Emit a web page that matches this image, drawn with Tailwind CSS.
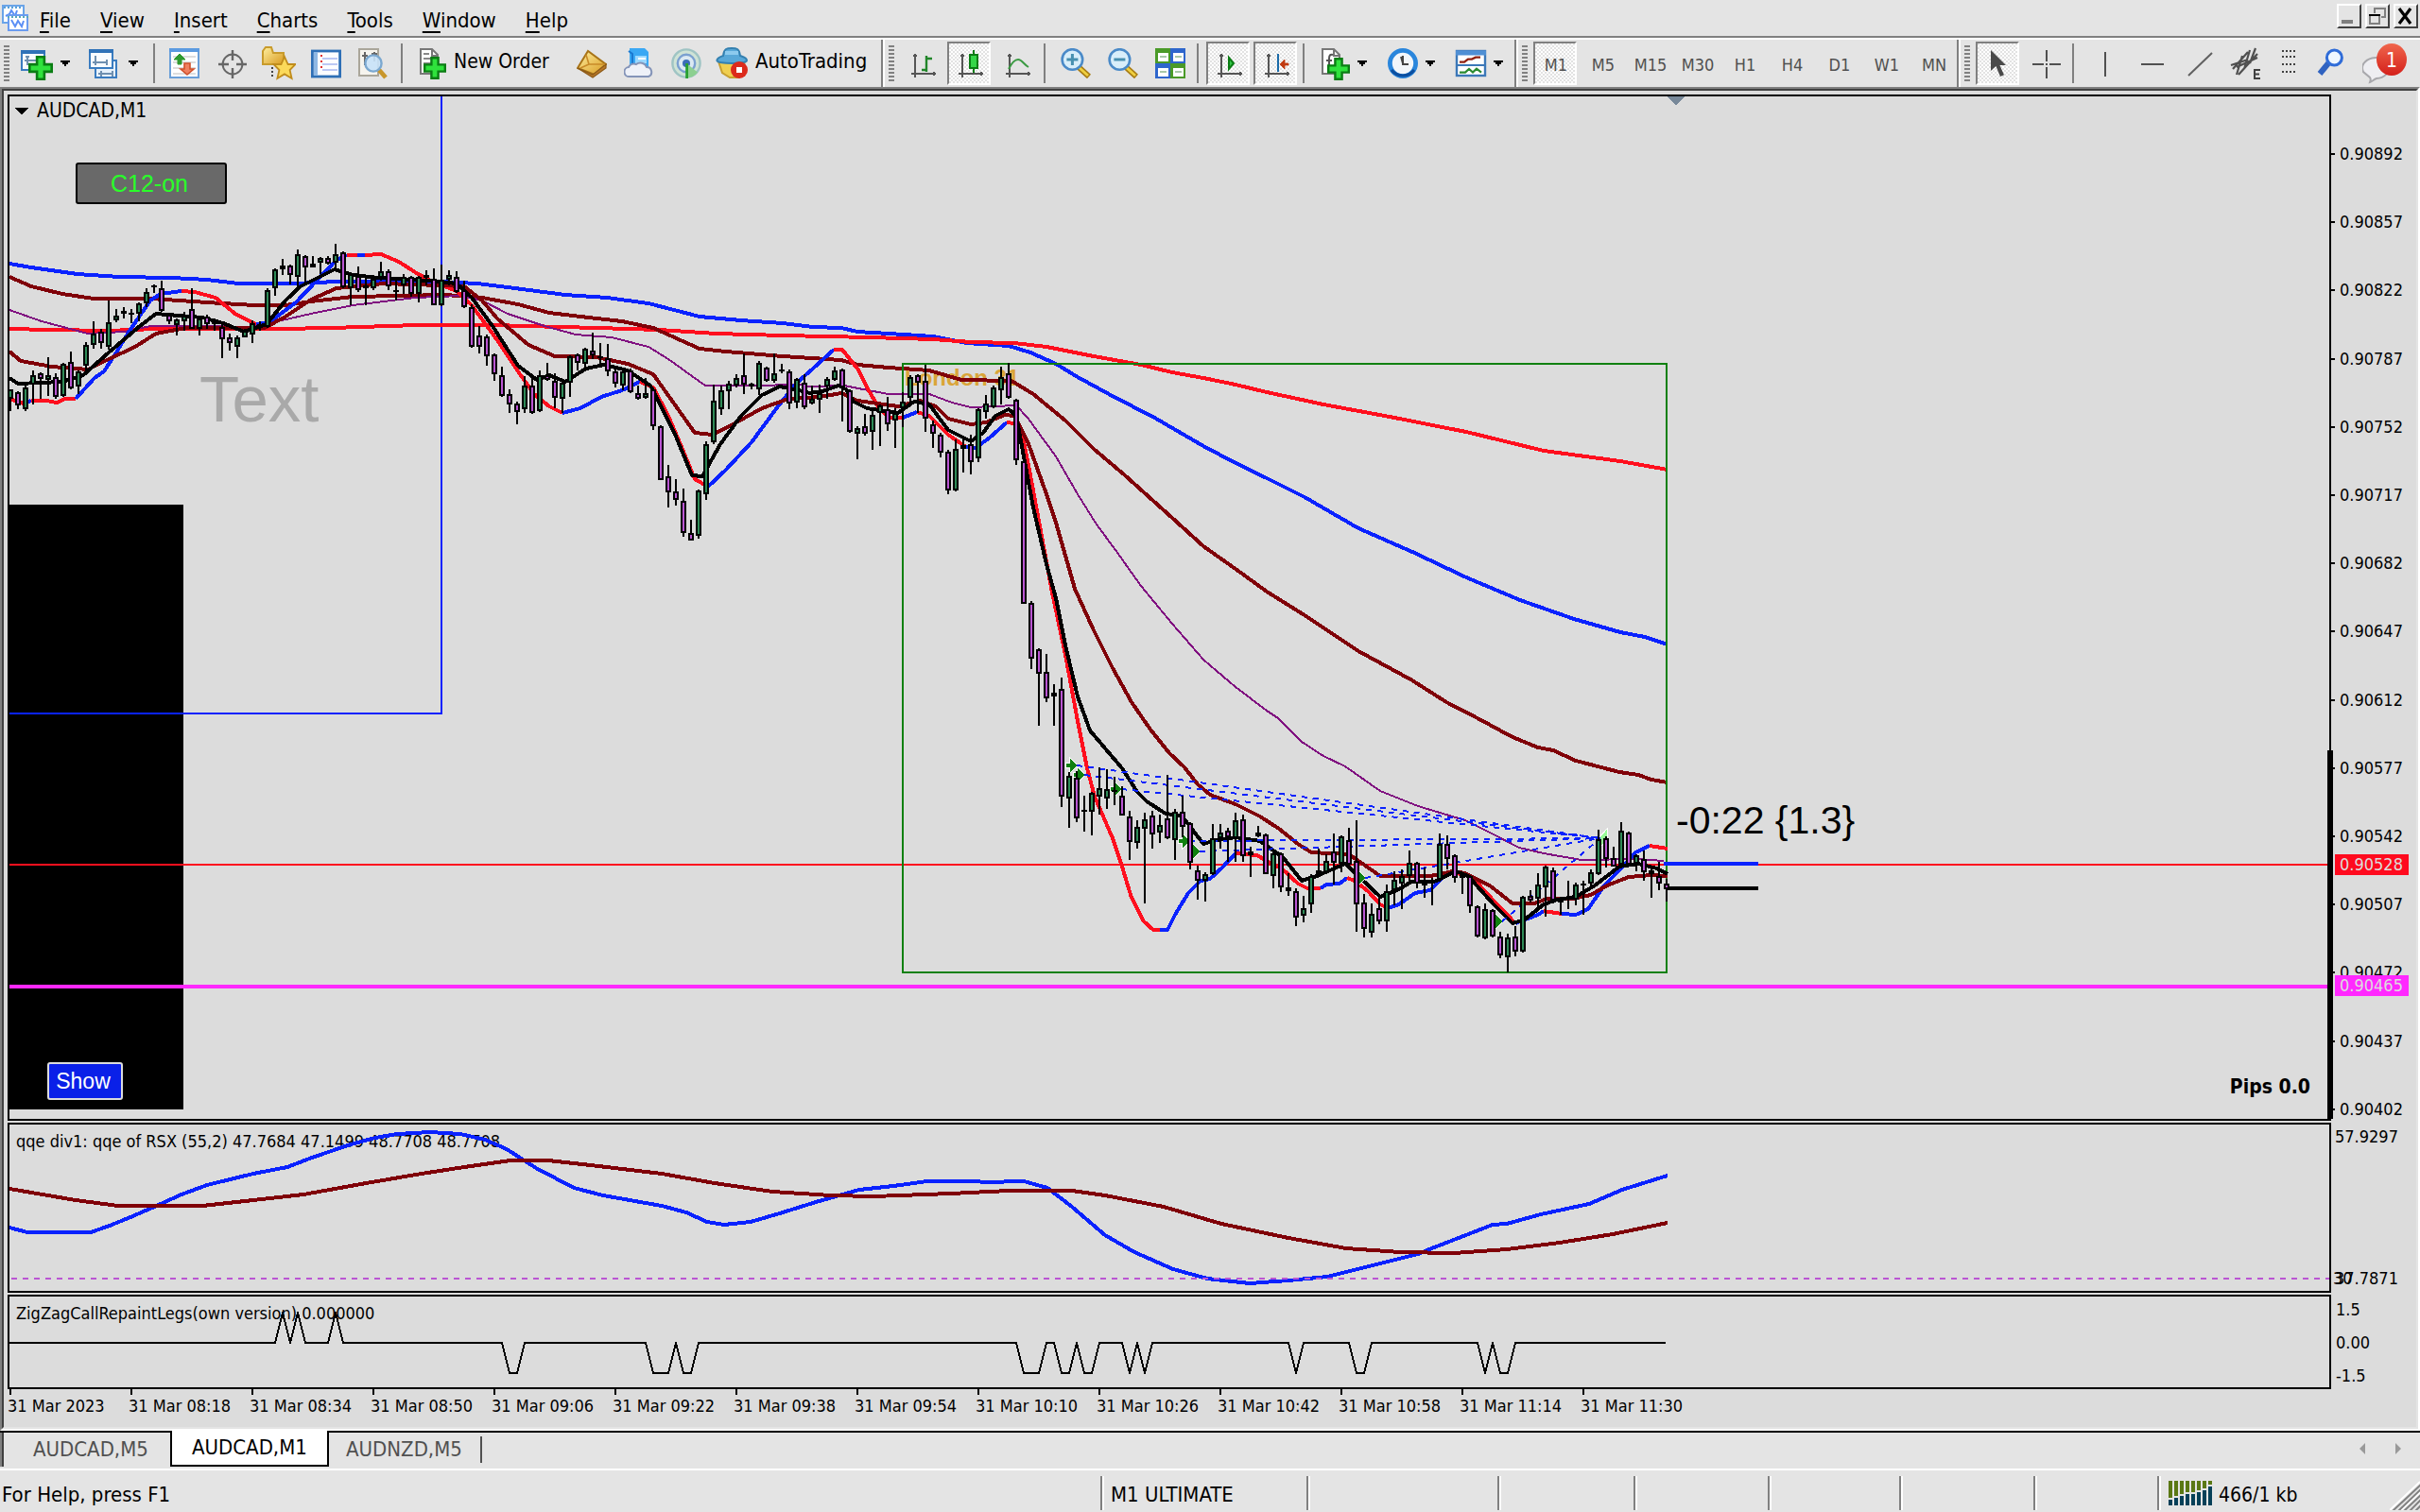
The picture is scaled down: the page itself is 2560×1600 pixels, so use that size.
<!DOCTYPE html>
<html lang="en">
<head>
<meta charset="utf-8">
<title>AUDCAD,M1</title>
<script src="https://cdn.jsdelivr.net/npm/@tailwindcss/browser@4"></script>
</head>
<body class="flex h-screen flex-col overflow-hidden bg-[#e4e4e4] font-['DejaVu_Sans_Condensed','DejaVu_Sans',sans-serif] text-[22px] leading-6 text-black">

<svg class="absolute h-0 w-0" aria-hidden="true">
  <defs>
    <linearGradient id="badge" x2="0" y2="1"><stop stop-color="#f0664c"/><stop offset="1" stop-color="#d4201a"/></linearGradient>
    <linearGradient id="gold" x2="1" y2="1"><stop stop-color="#fff0a0"/><stop offset="1" stop-color="#d89a20"/></linearGradient>
    <symbol id="plus" viewBox="0 0 10 10"><path d="M3.500.5h3v3h3v3h-3v3h-3v-3h-3v-3h3z" fill="#2fe23c" stroke="#0b7d14"/></symbol>
    <symbol id="axes" viewBox="0 0 16 16"><path d="M3.500 3v12.500M1.500 13.500h13M2.500 4h2M13.500 12.500v2" fill="none" stroke="#555"/></symbol>
    <symbol id="drop" viewBox="0 0 10 6"><path d="M0 0h10v2h-2v2h-2v2h-2v-2h-2v-2h-2z"/></symbol>
  </defs>
</svg>

<header class="flex h-[42px] shrink-0 items-center border-b-2 border-white">
  <div class="flex h-10 w-full items-center border-b-2 border-[#808080] pl-[2px]">
    <svg class="h-7 w-7" viewBox="0 0 14 14"><rect x=".5" y=".5" width="11" height="9" fill="#fff" stroke="#6aa4e8"/><path d="M1 1.500h10" stroke="#58a0d8" stroke-dasharray="1 1"/><path d="M2 6l2-1 1-2 2 3 1-3" fill="none" stroke="#5b8ff5"/><rect x="3.500" y="5.500" width="10" height="8" fill="#fff" stroke="#6a9cf0"/><path d="M3 6.500h11" stroke="#58a8b8" stroke-dasharray="1 1"/><path d="M5 8l2 3.500 1.500-3 2 3 1-3" fill="none" stroke="#5b8ff5"/></svg>
    <nav class="ml-[12px] flex flex-1 items-center gap-[31px] pt-[6px]">
      <button><u class="decoration-2 underline-offset-4">F</u>ile</button>
      <button><u class="decoration-2 underline-offset-4">V</u>iew</button>
      <button><u class="decoration-2 underline-offset-4">I</u>nsert</button>
      <button><u class="decoration-2 underline-offset-4">C</u>harts</button>
      <button><u class="decoration-2 underline-offset-4">T</u>ools</button>
      <button><u class="decoration-2 underline-offset-4">W</u>indow</button>
      <button><u class="decoration-2 underline-offset-4">H</u>elp</button>
    </nav>
    <div class="flex gap-1 self-start pt-1 pr-[2px]">
      <button aria-label="Minimize" class="h-[26px] w-[26px] border-2 border-t-white border-r-[#404040] border-b-[#404040] border-l-white"><svg class="h-[22px] w-[22px]" viewBox="0 0 11 11"><path d="M1.500 8.500h6" stroke="#808080" stroke-width="2"/></svg></button>
      <button aria-label="Restore" class="h-[26px] w-[26px] border-2 border-t-white border-r-[#404040] border-b-[#404040] border-l-white"><svg class="h-[22px] w-[22px]" viewBox="0 0 11 11"><path d="M4 4v-2.500h5.500v4.500h-2" fill="none" stroke="#808080"/><path d="M1.500 5.500v4h5v-4" fill="none" stroke="#808080"/><path d="M1 5h6" stroke="#000" stroke-width="1"/></svg></button>
      <button aria-label="Close" class="h-[26px] w-[26px] border-2 border-t-white border-r-[#404040] border-b-[#404040] border-l-white"><svg class="h-[22px] w-[22px]" viewBox="0 0 11 11"><path d="M2 1.500l6 8M8 1.500l-6 8" stroke="#000" stroke-width="1.600"/></svg></button>
    </div>
  </div>
</header>

<div class="flex h-[50px] shrink-0">
  <div class="flex w-[936px] items-center border-r-2 border-white">
    <span class="h-[38px] w-[14px] shrink-0 bg-[repeating-linear-gradient(#808080_0_2px,transparent_2px_4px)] bg-[length:6px_38px] bg-[position:4px_0] bg-no-repeat"></span>
    <button aria-label="New chart" class="flex w-[72px] shrink-0 items-center gap-[6px] pl-2"><svg class="h-9 w-9" viewBox="0 0 18 18"><rect x=".5" y="2.500" width="12" height="10" fill="#f8fbff" stroke="#3a7cc0"/><path d="M0 3h13" stroke="#2f72b8" stroke-width="2"/><path d="M3.500 5v5M2 7.500h6M2.500 5.500h2" stroke="#7090b0" fill="none"/><use href="#plus" x="4" y="5" width="13" height="13"/></svg><svg class="h-[6px] w-[10px]"><use href="#drop"/></svg></button>
    <button aria-label="Profiles" class="flex w-[72px] shrink-0 items-center gap-[6px] pl-2"><svg class="h-9 w-9" viewBox="0 0 18 18"><rect x="3.500" y="7.500" width="11" height="9" fill="#e8f2fc" stroke="#3a7cc0"/><path d="M5 14.500h8M6.500 13v3M12.500 13v3" stroke="#7090b0"/><rect x=".5" y="2.500" width="12" height="9" fill="#f8fbff" stroke="#3a7cc0"/><path d="M0 2.500h13" stroke="#2f72b8" stroke-width="2"/><path d="M2 8.500h8M3.500 5v5M9.500 7v3" stroke="#7090b0"/></svg><svg class="h-[6px] w-[10px]"><use href="#drop"/></svg></button>
    <span class="ml-1 mr-[6px] h-[42px] w-[2px] shrink-0 bg-[#808080]"></span>
    <button aria-label="Market Watch" class="flex w-[50px] shrink-0 justify-center"><svg class="h-8 w-8" viewBox="0 0 16 16"><rect x=".5" y=".5" width="15" height="15" fill="#fff" stroke="#6a9fd8"/><path d="M0 1h16" stroke="#5b9ae0" stroke-width="2"/><path d="M2 4.500h12M2 7.500h12M2 10.500h12M2 13.500h12" stroke="#ddd"/><path d="M5.500 3l3 3h-2v2.500h-2v-2.500h-2z" fill="#2f9a2f" stroke="#2f9a2f" stroke-width=".5"/><path d="M9.500 14l3.500-3h-2v-3h-3v3h-2z" fill="#f08060" stroke="#d0502a" stroke-width=".8"/></svg></button>
    <button aria-label="Data Window" class="flex w-[50px] shrink-0 justify-center"><svg class="h-8 w-8" viewBox="0 0 16 16"><circle cx="8.500" cy="8.500" r="5.200" fill="none" stroke="#666"/><path d="M8.500 1v5.500M8.500 10.500v5.500M1 8.500h5.500M10.500 8.500h5.500" stroke="#666" stroke-width="1.200"/></svg></button>
    <button aria-label="Navigator" class="flex w-[50px] shrink-0 justify-center"><svg class="h-9 w-9" viewBox="0 0 18 18"><path d="M.5 9.500v-7l1.500-2h3l1 3h5.500v6z" fill="url(#gold)" stroke="#c89b2c"/><path d="M5.500 11v6" stroke="#444" stroke-dasharray="1 1"/><path d="M12 5.500l1.800 4h4l-3 3 1 4.500-3.800-2.300-3.800 2.300 1-4.500-3-3h4z" fill="#fbd95a" stroke="#c08c1c" stroke-width=".9"/></svg></button>
    <button aria-label="Terminal" class="flex w-[50px] shrink-0 justify-center"><svg class="h-8 w-8" viewBox="0 0 16 16"><rect x=".7" y="1.500" width="14.600" height="13.500" fill="#fdfdff" stroke="#2e6fb6" stroke-width="1.400"/><path d="M2.500 2v12.500" stroke="#8fb8e4" stroke-width="2"/><path d="M6 5.500h8M6 8.500h8M6 11.500h8" stroke="#bcc8f4"/><path d="M5.500 3.500v7" stroke="#e03030" stroke-dasharray="1 2"/></svg></button>
    <button aria-label="Strategy Tester" class="flex w-[50px] shrink-0 justify-center"><svg class="h-9 w-9" viewBox="0 0 18 18"><rect x="1.500" y="1.500" width="10" height="14" fill="#f6f4ee" stroke="#aaa69a"/><path d="M4.500 3v7M3 5h3M9.500 3v5M8 4h3" stroke="#666"/><path d="M12 12.500l3.500 4" stroke="#c8962a" stroke-width="2.400"/><circle cx="9" cy="9" r="4.300" fill="#c8e2f8" fill-opacity=".9" stroke="#7ba8d0" stroke-width="1.200"/></svg></button>
    <span class="ml-1 mr-[6px] h-[42px] w-[2px] shrink-0 bg-[#808080]"></span>
    <button class="flex w-[169px] shrink-0 items-center gap-[2px] pl-[10px] text-[21px] whitespace-nowrap"><svg class="h-9 w-9" viewBox="0 0 18 18"><path d="M1.500 1.500h6l3 3v10h-9z" fill="#fff" stroke="#777"/><path d="M3 4h3M3 6.500h5M3 9h6M3 11.500h4" stroke="#888"/><path d="M7.500 1.500v3.500h3" fill="none" stroke="#777"/><use href="#plus" x="3" y="5.500" width="12" height="12"/></svg><span class="pb-1">New Order</span></button>
    <button aria-label="MetaEditor" class="flex w-[50px] shrink-0 justify-center"><svg class="h-8 w-8" viewBox="0 0 16 16"><path d="M.5 10.500L6 1.500l9.500 7-6 5.500z" fill="url(#gold)" stroke="#a87418"/><path d="M.5 10.500l8 3.500 7-5.500v2L8.500 15.500z" fill="#b8782a" stroke="#8c5a18" stroke-width=".6"/><path d="M5 3.500l1.500 5 8.500 0M6.500 8.500l-4.500 2" fill="none" stroke="#c88a28" stroke-width=".8"/></svg></button>
    <button aria-label="Virtual Hosting" class="flex w-[50px] shrink-0 justify-center"><svg class="h-8 w-8" viewBox="0 0 16 16"><path d="M3 0h8l2 2v8h-10z" fill="#3aa8f4"/><path d="M2.500 1.500l2 1.500v7" fill="none" stroke="#1a78d0"/><path d="M6 4h6v4h-6z" fill="#9ad8ff"/><path d="M7.500 5.500h4" stroke="#fff"/><path d="M3 15a2.500 2.500 0 0 1-.5-5 3 3 0 0 1 4-1.500 3.500 3.500 0 0 1 5.500 1.500 2.600 2.600 0 0 1 1 5z" fill="#eef1f8" stroke="#8494b8"/></svg></button>
    <button aria-label="Signals" class="flex w-[50px] shrink-0 justify-center"><svg class="h-8 w-8" viewBox="0 0 16 16"><circle cx="8" cy="8" r="7.300" fill="#cfe3d6" stroke="#9fc4c4" stroke-width="1.200"/><circle cx="8" cy="8" r="4.600" fill="#dbe9f2" stroke="#7ba0d0" stroke-width="1.200"/><circle cx="8" cy="8" r="2" fill="#3a6cb8"/><path d="M8 8v7.800a8 8 0 0 0 6-3z" fill="#8cd090"/><path d="M8.300 8v8" stroke="#28a030" stroke-width="1.400"/></svg></button>
    <button class="flex flex-1 items-center gap-[6px] pl-[6px] whitespace-nowrap"><svg class="h-9 w-9" viewBox="0 0 18 18"><path d="M1.500 8l2 6 4 2.500h5l3-8.500z" fill="#f0cf50" stroke="#c8a030"/><path d="M.7 7.500c0-1.500 2-2 3.300-2.500C4.500 1 6 1 8.500 1s4 0 4.500 4c1.500.5 3.500 1 3.500 2.500 0 2-15.800 2-15.800 0z" fill="#58a8d8" stroke="#3480b0"/><path d="M5 3.500h7" stroke="#8ccaee" stroke-width="2"/><circle cx="12.500" cy="12.500" r="4.500" fill="#dc2a1c"/><rect x="11" y="11" width="3" height="3" fill="#fff"/></svg><span class="pb-1">AutoTrading</span></button>
    <span class="h-full w-[2px] bg-[#808080]"></span>
  </div>

  <div class="flex w-[670px] items-center border-r-2 border-white">
    <span class="h-[38px] w-[14px] shrink-0 bg-[repeating-linear-gradient(#808080_0_2px,transparent_2px_4px)] bg-[length:6px_38px] bg-[position:4px_0] bg-no-repeat"></span>
    <button aria-label="Bar chart" class="flex w-[50px] shrink-0 justify-center pl-1"><svg class="h-8 w-8" viewBox="0 0 16 16"><use href="#axes"/><path d="M9.500 4v8.500M9.500 5.500h3M7 11.500h2.500" stroke="#22862a" stroke-width="1.200"/></svg></button>
    <button aria-label="Candlesticks" class="mx-[2px] flex h-[46px] w-[46px] shrink-0 items-center justify-center border-2 border-t-[#808080] border-r-white border-b-white border-l-[#808080] bg-[conic-gradient(#fff_25%,#e2e2e2_0_50%,#fff_0_75%,#e2e2e2_0)] bg-[length:4px_4px] pl-1"><svg class="h-8 w-8" viewBox="0 0 16 16"><use href="#axes"/><path d="M9.500 1v12" stroke="#0b7d14"/><rect x="7.500" y="3.500" width="4" height="7" fill="#35d648" stroke="#0b7d14"/></svg></button>
    <button aria-label="Line chart" class="flex w-[50px] shrink-0 justify-center pl-1"><svg class="h-8 w-8" viewBox="0 0 16 16"><use href="#axes"/><path d="M3 11c1-2 3-5 5-5s3 2.500 5.500 4" fill="none" stroke="#3a9a42"/></svg></button>
    <span class="ml-1 mr-[6px] h-[42px] w-[2px] shrink-0 bg-[#808080]"></span>
    <button aria-label="Zoom in" class="flex w-[50px] shrink-0 justify-center pl-[2px]"><svg class="h-8 w-8" viewBox="0 0 16 16"><path d="M9.500 10l5.500 5" stroke="#a87c14" stroke-width="3"/><path d="M9.500 10l5 4.500" stroke="#f0d040" stroke-width="1.400"/><circle cx="6.200" cy="6" r="5.400" fill="#d8eefa" stroke="#4a8ac8" stroke-width="1.300"/><path d="M6.200 3v6M3.200 6h6" stroke="#4890b0" stroke-width="1.500"/></svg></button>
    <button aria-label="Zoom out" class="flex w-[50px] shrink-0 justify-center pl-[2px]"><svg class="h-8 w-8" viewBox="0 0 16 16"><path d="M9.500 10l5.500 5" stroke="#a87c14" stroke-width="3"/><path d="M9.500 10l5 4.500" stroke="#f0d040" stroke-width="1.400"/><circle cx="6.200" cy="6" r="5.400" fill="#d8eefa" stroke="#4a8ac8" stroke-width="1.300"/><path d="M3.200 6h6" stroke="#4890b0" stroke-width="1.500"/></svg></button>
    <button aria-label="Tile windows" class="flex w-[50px] shrink-0 justify-center pl-[2px]"><svg class="h-8 w-8" viewBox="0 0 16 16"><path d="M0 0h8v8h-8zM8 8h8v8h-8z" fill="#4a9a28"/><path d="M8 0h8v8h-8zM0 8h8v8h-8z" fill="#2e66cc"/><path d="M1.500 2.500h5.500v4.500h-5.500zM9.500 2.500h5.500v4.500h-5.500zM1.500 10.500h5.500v4.500h-5.500zM9.500 10.500h5.500v4.500h-5.500z" fill="#fff"/><path d="M2.500 4.500h3.500M10.500 4.500h3.500M2.500 12.500h3.500M10.500 12.500h3.500" stroke="#a8c8a8"/></svg></button>
    <span class="ml-1 mr-[6px] h-[42px] w-[2px] shrink-0 bg-[#808080]"></span>
    <button aria-label="Auto scroll" class="mx-[2px] flex h-[46px] w-[46px] shrink-0 items-center justify-center border-2 border-t-[#808080] border-r-white border-b-white border-l-[#808080] bg-[conic-gradient(#fff_25%,#e2e2e2_0_50%,#fff_0_75%,#e2e2e2_0)] bg-[length:4px_4px] pl-1"><svg class="h-8 w-8" viewBox="0 0 16 16"><use href="#axes"/><path d="M7.500 5l2.500 3-2.500 3z" fill="#35c648" stroke="#0b7d14"/></svg></button>
    <button aria-label="Chart shift" class="mx-[2px] flex h-[46px] w-[46px] shrink-0 items-center justify-center border-2 border-t-[#808080] border-r-white border-b-white border-l-[#808080] bg-[conic-gradient(#fff_25%,#e2e2e2_0_50%,#fff_0_75%,#e2e2e2_0)] bg-[length:4px_4px] pl-1"><svg class="h-8 w-8" viewBox="0 0 16 16"><use href="#axes"/><path d="M8.500 3v9.500" stroke="#1a6aa8"/><path d="M9.500 8.500l2.500-2.500v2h2v1h-2v2z" fill="#c03a10" stroke="#c03a10" stroke-width=".4"/></svg></button>
    <span class="ml-1 mr-[6px] h-[42px] w-[2px] shrink-0 bg-[#808080]"></span>
    <button aria-label="Indicators" class="flex w-[72px] shrink-0 items-center gap-[6px] pl-2"><svg class="h-9 w-9" viewBox="0 0 18 18"><path d="M2.500 1.500h6l3 3v10h-9z" fill="#fff" stroke="#777"/><path d="M8.500 1.500v3.500h3" fill="none" stroke="#777"/><path d="M8 4.500c-1.500-.5-2 .5-2 2v5.500M4.500 7.500h3" fill="none" stroke="#555"/><use href="#plus" x="5" y="6" width="12" height="12"/></svg><svg class="h-[6px] w-[10px]"><use href="#drop"/></svg></button>
    <button aria-label="Periods" class="flex w-[72px] shrink-0 items-center gap-[6px] pl-2"><svg class="h-9 w-9" viewBox="0 0 18 18"><circle cx="9" cy="9" r="6.800" fill="#f2f6fa" stroke="#2a86dc" stroke-width="2.400"/><path d="M3 12.500a7.500 7.500 0 0 0 12 0" fill="none" stroke="#0c4fa0" stroke-width="1.500"/><path d="M9 5v4.500h3M8 5.500l1 3.500" fill="none" stroke="#444"/></svg><svg class="h-[6px] w-[10px]"><use href="#drop"/></svg></button>
    <button aria-label="Templates" class="flex w-[72px] shrink-0 items-center gap-[6px] pl-2"><svg class="h-9 w-9" viewBox="0 0 18 18"><rect x="1.500" y="2.500" width="15" height="13" fill="#fff" stroke="#3c78b8" stroke-width="1.200"/><path d="M1 3.500h16" stroke="#4f8fd4" stroke-width="2.500"/><path d="M1 10h16" stroke="#3c78b8"/><path d="M3 8.300h2.500l2-1.500h2l2-1h2.500" fill="none" stroke="#902010" stroke-width="1.200"/><path d="M3 13.800h3l2-1.800 2 1.800 2-2 2.500 2" fill="none" stroke="#2a8a30" stroke-width="1.100"/></svg><svg class="h-[6px] w-[10px]"><use href="#drop"/></svg></button>
    <span class="h-full w-[2px] bg-[#808080]"></span>
  </div>

  <div class="flex w-[468px] items-center border-r-2 border-white text-[18px] text-[#505050]">
    <span class="h-[38px] w-[14px] shrink-0 bg-[repeating-linear-gradient(#808080_0_2px,transparent_2px_4px)] bg-[length:6px_38px] bg-[position:4px_0] bg-no-repeat"></span>
    <button class="mx-[2px] h-[46px] w-[46px] shrink-0 border-2 border-t-[#808080] border-r-white border-b-white border-l-[#808080] bg-[conic-gradient(#fff_25%,#e2e2e2_0_50%,#fff_0_75%,#e2e2e2_0)] bg-[length:4px_4px] pt-1 pl-[2px]">M1</button>
    <button class="w-[50px] shrink-0 pt-1 pl-[2px]">M5</button>
    <button class="w-[50px] shrink-0 pt-1 pl-[2px]">M15</button>
    <button class="w-[50px] shrink-0 pt-1 pl-[2px]">M30</button>
    <button class="w-[50px] shrink-0 pt-1 pl-[2px]">H1</button>
    <button class="w-[50px] shrink-0 pt-1 pl-[2px]">H4</button>
    <button class="w-[50px] shrink-0 pt-1 pl-[2px]">D1</button>
    <button class="w-[50px] shrink-0 pt-1 pl-[2px]">W1</button>
    <button class="w-[50px] shrink-0 pt-1 pl-[2px]">MN</button>
    <span class="h-full w-[2px] shrink-0 bg-[#808080]"></span>
  </div>

  <div class="flex flex-1 items-center">
    <span class="h-[38px] w-[14px] shrink-0 bg-[repeating-linear-gradient(#808080_0_2px,transparent_2px_4px)] bg-[length:6px_38px] bg-[position:4px_0] bg-no-repeat"></span>
    <button aria-label="Cursor" class="mx-[2px] flex h-[46px] w-[46px] shrink-0 items-center justify-center border-2 border-t-[#808080] border-r-white border-b-white border-l-[#808080] bg-[conic-gradient(#fff_25%,#e2e2e2_0_50%,#fff_0_75%,#e2e2e2_0)] bg-[length:4px_4px]"><svg class="h-8 w-8" viewBox="0 0 16 16"><path d="M4.500 1v11l2.700-2.500 2.300 5.500 2-.9-2.300-5.100h3.300z" fill="#4a4a4a"/></svg></button>
    <button aria-label="Crosshair" class="flex w-[50px] shrink-0 justify-center pl-[2px]"><svg class="h-8 w-8" viewBox="0 0 16 16"><path d="M8.500 1v6M8.500 10v6M1 8.500h6M10 8.500h6M8 8.500h1" stroke="#505050"/></svg></button>
    <span class="ml-1 mr-[6px] h-[42px] w-[2px] shrink-0 bg-[#808080]"></span>
    <button aria-label="Vertical line" class="flex w-[50px] shrink-0 justify-center pl-[2px]"><svg class="h-8 w-8" viewBox="0 0 16 16"><path d="M8.500 2v13" stroke="#505050"/></svg></button>
    <button aria-label="Horizontal line" class="flex w-[50px] shrink-0 justify-center pl-1"><svg class="h-8 w-8" viewBox="0 0 16 16"><path d="M2 8.500h12" stroke="#505050"/></svg></button>
    <button aria-label="Trendline" class="flex w-[50px] shrink-0 justify-center pl-1"><svg class="h-8 w-8" viewBox="0 0 16 16"><path d="M2 14.500l12.500-12" stroke="#606060"/></svg></button>
    <button aria-label="Equidistant channel" class="flex w-[50px] shrink-0 justify-center pl-[2px]"><svg class="h-9 w-9" viewBox="0 0 18 18"><path d="M2 12l8-9M5 15l10-11M1 10l9-3M4 15l3-10M8 12l3-10M11 9l3-8M4 11l11-5" fill="none" stroke="#505050" stroke-width="1.100"/><path d="M16.500 12.500h-3v4.500h3M13.500 14.700h2.500" fill="none" stroke="#404040"/></svg></button>
    <button aria-label="Fibonacci" class="flex w-10 shrink-0 justify-center pl-[2px]"><svg class="h-8 w-8" viewBox="0 0 16 16"><path d="M4.500 1.500h7M4.500 4.500h7M4.500 8.500h7M4.500 12.500h7" stroke="#404040" stroke-dasharray="1 1"/></svg></button>
    <button aria-label="Search" class="flex w-[50px] shrink-0 justify-center"><svg class="h-8 w-8" viewBox="0 0 16 16"><path d="M2.500 13.500l4.500-5.500" stroke="#2f62c0" stroke-width="3"/><circle cx="10.200" cy="5" r="4" fill="#eef6ff" stroke="#2f6cd8" stroke-width="1.500"/></svg></button>
    <button aria-label="Notifications" class="flex h-full flex-1 items-center justify-center"><svg class="h-11 w-[52px]" viewBox="0 0 52 44"><path d="M1 31a14 11 0 1 1 14 7c-3 1-4 3-7 4 1-3 1-3 0-5z" fill="#eeeef2" stroke="#a8a8ac" stroke-width="2"/><ellipse cx="31" cy="18" rx="16" ry="17" fill="url(#badge)"/><text x="25" y="26" font-size="21" fill="#fff">1</text></svg></button>
  </div>
</div>

<main class="flex min-h-0 flex-1 flex-col border-2 border-t-[#808080] border-r-white border-b-white border-l-[#808080]">
  <div class="flex min-h-0 flex-1 flex-col border-2 border-t-[#404040] border-r-[#e4e4e4] border-b-[#e4e4e4] border-l-[#404040] bg-[#dcdcdc] pt-1 pl-1 text-[18px]">

    <section class="flex min-h-0 flex-1">
      <div class="relative min-w-0 flex-1 border-2 border-black">
        <svg id="price" class="absolute inset-0 h-full w-full" shape-rendering="crispEdges"></svg>
        <button class="absolute top-[70px] left-[70px] h-11 w-40 rounded-[3px] border-2 border-black bg-[#696969] pr-1 font-['Liberation_Sans',Arial,sans-serif] text-[25px] text-[#2aff2a]">C12-on</button>
        <button class="absolute bottom-[20px] left-10 h-10 w-20 rounded-[3px] border-2 border-[#dcdcdc] bg-[#0a20e8] pr-1 font-['Liberation_Sans',Arial,sans-serif] text-[23px] text-white">Show</button>
        <span class="absolute right-5 bottom-[22px] text-[21px] font-bold">Pips 0.0</span>
        <span class="absolute top-[692px] -right-1 bottom-0 w-[6px] bg-black"></span>
      </div>
      <div class="relative flex w-[90px] flex-col justify-between pt-[51px]">
        <div class="flex items-center gap-[5px]"><i class="h-[2px] w-1 bg-black"></i>0.90892</div>
        <div class="flex items-center gap-[5px]"><i class="h-[2px] w-1 bg-black"></i>0.90857</div>
        <div class="flex items-center gap-[5px]"><i class="h-[2px] w-1 bg-black"></i>0.90822</div>
        <div class="flex items-center gap-[5px]"><i class="h-[2px] w-1 bg-black"></i>0.90787</div>
        <div class="flex items-center gap-[5px]"><i class="h-[2px] w-1 bg-black"></i>0.90752</div>
        <div class="flex items-center gap-[5px]"><i class="h-[2px] w-1 bg-black"></i>0.90717</div>
        <div class="flex items-center gap-[5px]"><i class="h-[2px] w-1 bg-black"></i>0.90682</div>
        <div class="flex items-center gap-[5px]"><i class="h-[2px] w-1 bg-black"></i>0.90647</div>
        <div class="flex items-center gap-[5px]"><i class="h-[2px] w-1 bg-black"></i>0.90612</div>
        <div class="flex items-center gap-[5px]"><i class="h-[2px] w-1 bg-black"></i>0.90577</div>
        <div class="flex items-center gap-[5px]"><i class="h-[2px] w-1 bg-black"></i>0.90542</div>
        <div class="flex items-center gap-[5px]"><i class="h-[2px] w-1 bg-black"></i>0.90507</div>
        <div class="flex items-center gap-[5px]"><i class="h-[2px] w-1 bg-black"></i>0.90472</div>
        <div class="flex items-center gap-[5px]"><i class="h-[2px] w-1 bg-black"></i>0.90437</div>
        <div class="flex items-center gap-[5px]"><i class="h-[2px] w-1 bg-black"></i>0.90402</div>
        <span class="absolute top-[804px] left-1 h-[22px] w-[78px] bg-[#ff0a1e] pl-[5px] leading-[22px] text-[#dcdcdc]">0.90528</span>
        <span class="absolute top-[932px] left-1 h-[22px] w-[78px] bg-[#ff28ff] pl-[5px] leading-[22px] text-[#dcdcdc]">0.90465</span>
      </div>
    </section>

    <section class="mt-[2px] flex h-[180px] shrink-0">
      <div class="relative min-w-0 flex-1 border-2 border-black">
        <svg id="oscillator" class="absolute inset-0 h-full w-full" shape-rendering="crispEdges"></svg>
      </div>
      <div class="relative flex w-[90px] flex-col justify-between pt-[3px] pl-1">
        <span>57.9297</span>
        <span class="absolute bottom-[3px] left-[2px]">30</span>
        <span class="pb-[3px]">37.7871</span>
      </div>
    </section>

    <section class="mt-[2px] flex h-[100px] shrink-0">
      <div class="relative min-w-0 flex-1 border-2 border-black">
        <svg id="zigzag" class="absolute inset-0 h-full w-full" shape-rendering="crispEdges"></svg>
      </div>
      <div class="flex w-[90px] flex-col justify-between pt-1 pb-[2px] pl-[5px]">
        <span>1.5</span><span>0.00</span><span>-1.5</span>
      </div>
    </section>

    <div id="times" class="flex h-10 shrink-0 overflow-hidden"></div>
  </div>
</main>

<div class="flex h-[42px] shrink-0 border-t-2 border-b-2 border-t-black border-b-white text-[#505050]">
  <span class="mb-[2px] w-1 border-r-2 border-l-2 border-r-[#404040] border-l-[#808080]"></span>
  <button class="w-[176px] pb-[2px] pl-[31px] text-left">AUDCAD,M5</button>
  <button class="-mt-[2px] mb-[2px] w-[168px] border-2 border-t-0 border-black bg-white pl-[21px] text-left text-black">AUDCAD,M1</button>
  <button class="w-[158px] pb-[2px] pl-[18px] text-left">AUDNZD,M5</button>
  <span class="mt-1 ml-[2px] h-7 w-[2px] bg-[#505050]"></span>
  <div class="ml-auto flex items-center gap-8 pr-5 pb-1">
    <button aria-label="Previous tabs"><svg class="h-3 w-[6px]" viewBox="0 0 6 12"><path d="M6 0v12L0 6z" fill="#999"/></svg></button>
    <button aria-label="Next tabs"><svg class="h-3 w-[6px]" viewBox="0 0 6 12"><path d="M0 0v12l6-6z" fill="#999"/></svg></button>
  </div>
</div>

<footer class="flex h-11 shrink-0 items-center pb-[2px] pt-[6px]">
  <span class="flex-1 pl-[2px] pt-1">For Help, press F1</span>
  <span class="flex h-9 w-[218px] items-center border-l-2 border-[#808080] pl-[9px] pt-1 shadow-[inset_2px_0_#fff]">M1 ULTIMATE</span>
  <span class="h-9 w-[202px] border-l-2 border-[#808080] shadow-[inset_2px_0_#fff]"></span>
  <span class="h-9 w-36 border-l-2 border-[#808080] shadow-[inset_2px_0_#fff]"></span>
  <span class="h-9 w-[142px] border-l-2 border-[#808080] shadow-[inset_2px_0_#fff]"></span>
  <span class="h-9 w-[139px] border-l-2 border-[#808080] shadow-[inset_2px_0_#fff]"></span>
  <span class="h-9 w-[142px] border-l-2 border-[#808080] shadow-[inset_2px_0_#fff]"></span>
  <span class="h-9 w-[131px] border-l-2 border-[#808080] shadow-[inset_2px_0_#fff]"></span>
  <span class="flex h-9 w-[278px] items-center border-l-2 border-[#808080] pl-[10px] shadow-[inset_2px_0_#fff]">
    <svg class="mr-[7px] h-[26px] w-[46px]" viewBox="0 0 46 26" shape-rendering="crispEdges"><path d="M0 0h4v18h-4zM6 0h4v16h-4zM12 0h4v14h-4zM18 0h4v12h-4zM24 0h4v12h-4zM30 0h4v10h-4zM36 0h4v8h-4zM42 0h4v4h-4z" fill="#5a7814"/><path d="M0 20h4v6h-4zM6 18h4v8h-4zM12 16h4v10h-4zM18 14h4v12h-4zM24 14h4v12h-4zM30 12h4v14h-4zM36 10h4v16h-4zM42 6h4v20h-4z" fill="#064058"/></svg>
    <span class="pt-1 text-[21px]">466/1 kb</span>
    <svg class="ml-auto h-8 w-8 self-end" viewBox="0 0 32 32"><path d="M0 32L32 2M12 32L32 13M22 32l10-9" stroke="#fff" stroke-width="2"/><path d="M3 33L33 5M9 33L33 10M15 33l18-17M21 33l12-12M27 33l6-6" stroke="#808080" stroke-width="2"/></svg>
  </span>
</footer>

<script>
const BLUE = '#0a22ff', RED = '#ff0f1e', MAROON = '#800008', PURPLE = '#801080';
const line = (pts, color, w = 4, extra = '') =>
  `<polyline points="${pts}" fill="none" stroke="${color}" stroke-width="${w}" stroke-linejoin="round" ${extra}/>`;

// Bars of 8px pitch; each row is high, body top, body bottom, low (thirds of a pixel below base) and kind.
const series = [
 {base: 240, first: 0, rows: `515 517 545 586 g|523 526 567 580 p|505 510 580 586 g|456 472 500 563 g|462 465 483 545 p|415 470 487 537 g|465 476 541 545 p|433 436 538 540 g|397 430 512 516 p|455 458 507 530 g|366 374 440 455 g|300 340 375 387 g|325 332 370 388 p|235 302 380 390 g|260 283 297 303 g|255 267 277 292 g|262 273 277 305 d|240 242 276 300 g|195 207 242 255 g|183 187 192 210 d|170 195 266 270 p|275 280 300 310 p|290 295 311 345 g|270 282 301 330 g|195 260 325 325 p|290 292 325 345 g|280 285 308 325 p|290 298 310 330 p|312 318 357 418 p|340 350 370 393 p|345 350 382 418 g|325 330 350 352 g|296 305 342 370 g|300 310 316 330 d|195 200 318 322 g|132 136 195 220 g|103 123 135 152 g|120 124 153 183 p|73 88 158 195 g|90 94 128 185 p|92 118 128 130 g|95 100 115 150 g|93 98 117 120 p|55 88 115 140 g|78 82 193 195 p|145 150 195 250 g|127 155 200 208 p|165 187 195 250 g|160 165 195 200 g|110 140 163 170 g|135 140 190 200 p|165 200 204 235 d|150 158 185 212 g|157 160 213 222 p|155 160 214 240 g|138 152 163 185 p|133 165 248 250 p|120 168 250 252 g|138 152 167 185 g|142 160 207 210 p|170 200 255 258 p|245 255 382 385 p|315 345 382 403 p|342 347 412 442 p|402 405 467 490 p|445 472 538 540 p|515 530 563 590 p|555 560 587 628 p|475 505 578 592 g|475 505 590 594 p|455 470 585 587 g|433 470 485 490 p|465 490 543 577 p|485 495 545 592 g|408 410 495 540 g|402 405 433 455 p|385 387 436 455 g|335 392 408 420 p|370 410 416 440 d|372 417 458 475 p|450 458 497 510 p|450 458 503 520 g|450 455 525 527 p|505 527 545 550 p|480 527 543 547 g|510 515 633 645 p|630 632 803 804 p|755 793 843 892 p|800 840 867 885 p|832 870 972 983 p|930 973 995 995 p|833 836 982 990 g|680 690 850 868 g|500 553 683 690 g|505 518 580 598 g|490 497 522 580 g|468 480 505 510 g|402 470 502 530 p|495 498 508 515 p|427 433 517 535 g|443 447 490 492 p|402 465 490 495 g|435 453 458 465 d|452 460 560 578 p`},
 {base: 340, first: 104, rows: `180 182 257 275 g|168 195 272 278 p|205 245 262 265 g|200 228 250 292 g|178 182 208 245 g|145 157 185 190 g|150 153 210 318 p|216 218 352 353 p|333 340 357 438 g|295 333 357 363 p|285 296 352 407 g|265 268 290 395 g|240 278 327 348 p|275 292 316 402 g|225 255 277 335 g|170 176 243 262 g|168 171 195 290 p|138 188 310 352 p|315 327 357 402 p|355 360 418 432 p|408 415 538 550 p|375 404 538 540 g|375 393 404 480 g|360 390 448 485 p|275 278 435 448 g|235 260 287 310 g|205 211 272 275 g|145 177 220 265 g|133 165 243 245 p|246 248 442 455 p|440 445 898 898 p|888 895 1072 1103 p|1038 1041 1120 1283 p|1057 1112 1198 1210 p|1153 1178 1192 1283 g|1130 1166 1510 1542 p`},
 {base: 760, first: 140, rows: `170 182 256 348 g|168 188 317 330 p|246 291 297 360 d|233 236 298 372 g|157 223 250 305 g|163 224 256 288 g|185 229 235 277 d|216 247 310 310 p|294 313 394 450 p|324 344 395 414 g|300 320 352 588 g|294 308 370 414 p|306 338 364 396 g|180 318 382 384 p|288 298 388 450 g|246 296 346 378 p|330 332 460 480 p|468 482 515 576 p|488 494 515 582 g|336 380 496 498 g|336 362 380 414 g|348 356 378 456 p|300 325 380 456 g|306 320 437 456 p|408 422 434 504 g|342 362 376 378 g|366 368 496 496 p|415 430 502 540 g|426 430 538 552 p|492 536 550 564 p|540 548 634 660 p|564 602 628 648 g|494 500 592 618 g|414 482 496 498 g|432 452 488 490 g|366 422 460 528 p|372 374 462 490 g|348 386 466 468 p|324 452 592 678 p|558 584 670 696 p|588 620 682 696 g|565 602 646 654 p|528 548 646 678 g|486 513 547 594 g|480 500 524 606 g|420 458 500 516 g|456 458 524 540 p|475 520 530 570 g|508 515 522 594 g|366 398 512 518 g|372 398 448 480 p|432 434 508 522 p|490 494 508 558 g|498 501 598 618 p|594 597 694 695 p|588 607 700 702 g`},
 {base: 780, first: 196, rows: `545 548 634 636 p|618 632 694 702 p|624 637 700 748 g|600 632 682 696 p|505 507 682 684 g|486 505 520 526 p|432 469 514 550 g|408 410 478 570 g|415 422 518 528 p|510 518 526 564 d|456 506 512 546 d|462 469 515 534 g|456 464 470 564 d|420 428 466 470 g|294 325 436 438 g|315 320 388 414 p|348 385 410 412 p|270 296 406 410 g|300 302 404 406 p|372 374 402 426 g|360 386 430 456 p|415 422 436 510 p|396 442 466 486 p|450 464 484 522 p`}
];
let candles = '';
for (const s of series) s.rows.split('|').forEach((r, k) => {
  const f = r.split(' '), x = 11 + 8 * (s.first + k);
  const [h, t, b, l] = f.slice(0, 4).map(v => Math.round(s.base + v / 3));
  candles += `<rect x="${x - 1}" y="${h}" width="2" height="${l - h}"/><rect x="${x - 3}" y="${t}" width="6" height="${Math.max(2, b - t)}"/>`;
  if (f[4] !== 'd' && b - t > 4) candles += `<rect x="${x - 1}" y="${t + 2}" width="2" height="${b - t - 4}" fill="${f[4] === 'g' ? '#2e8b57' : '#ba55d3'}"/>`;
});

const slowBlue = '10,279 33,283 82,290 126,293 181,294 219,296 252,300 307,300 340,299 351,298 384,298 466,298 505,300 537,304 598,312 642,315 686,321 740,335 784,339 828,342 860,346 890,347 907,351 940,353 987,356 1023,363 1067,366 1090,373 1117,385 1140,399 1173,417 1223,443 1273,472 1307,490 1340,506 1380,526 1437,559 1494,584 1551,611 1608,635 1665,655 1714,669 1740,674 1764,682';
const slowRed = '10,348 52,349 115,350 165,348 296,348 351,347 441,344 521,344 631,347 697,349 757,353 828,355 920,357 987,359 1027,362 1073,363 1107,367 1157,377 1207,386 1240,394 1273,400 1307,407 1340,415 1400,428 1470,441 1551,457 1633,477 1714,488 1764,497';
const slowMaroon = '10,293 33,303 66,311 99,316 159,316 219,320 269,323 302,323 329,319 373,314 472,312 510,315 548,322 581,331 614,335 658,340 691,347 740,369 768,372 828,377 890,381 907,386 940,389 983,392 1017,402 1070,403 1093,417 1127,445 1157,475 1190,503 1240,548 1273,578 1307,602 1340,626 1380,651 1437,689 1494,720 1530,743 1563,760 1600,780 1627,791 1643,794 1667,805 1713,817 1733,820 1747,825 1764,828';
const purple = '10,328 44,340 93,353 132,351 159,345 241,345 258,347 285,342 329,332 373,323 439,315 488,313 510,318 537,332 576,345 609,354 647,357 686,367 707,380 746,408 795,408 845,407 857,409 893,408 913,412 940,417 983,417 1007,426 1027,431 1075,429 1087,442 1117,483 1140,523 1160,555 1180,582 1207,620 1240,660 1273,698 1307,727 1340,752 1352,760 1377,785 1400,800 1423,811 1460,837 1500,853 1533,863 1550,868 1580,883 1607,897 1633,903 1673,910 1733,909 1760,911';
const fastMaroon = '10,372 22,382 55,388 93,391 115,380 143,367 165,353 197,347 241,347 280,347 302,335 329,317 356,305 406,300 466,302 491,303 510,318 526,337 559,365 587,377 631,378 664,385 691,396 713,427 735,458 754,460 779,447 806,432 834,422 867,420 890,416 907,424 950,430 973,424 990,430 1003,443 1027,449 1043,447 1063,439 1073,440 1087,467 1107,523 1117,553 1137,623 1157,667 1177,707 1197,743 1217,772 1237,797 1253,812 1267,830 1280,841 1307,851 1333,864 1353,877 1373,893 1387,902 1427,904 1440,913 1460,927 1513,927 1537,922 1550,924 1577,938 1600,956 1623,956 1637,951 1663,951 1683,947 1700,937 1723,928 1747,926 1764,927';
const black = '10,400 19,406 66,404 88,397 115,373 148,345 165,332 214,336 236,342 258,351 282,343 302,318 318,303 340,292 354,285 373,291 400,294 455,297 483,300 499,315 521,345 548,387 568,402 581,397 598,404 620,390 639,386 664,392 688,408 713,457 732,503 743,504 762,470 784,440 806,418 825,409 845,413 857,416 870,414 887,408 895,412 903,425 917,432 950,437 967,425 983,428 1003,455 1027,467 1040,458 1053,440 1067,433 1075,440 1083,483 1093,537 1107,597 1117,633 1127,683 1140,737 1153,773 1187,813 1203,838 1213,848 1233,861 1250,863 1263,880 1273,893 1283,890 1307,886 1333,890 1357,907 1377,932 1393,927 1423,914 1440,930 1460,949 1480,941 1493,933 1517,933 1540,922 1553,927 1580,957 1600,977 1613,973 1633,957 1647,952 1667,949 1687,937 1713,917 1733,914 1753,919 1764,925';
// Fast average: colour changes with its direction.
const hull = [
 [RED, '10,422 25,427'], [BLUE, '25,427 33,424'], [RED, '33,424 49,424 60,426 69,422 80,422'],
 [BLUE, '80,422 100,400 110,393 123,373 137,350 159,318 170,311 192,308'], [RED, '192,308 206,309 228,315 250,333 271,343'],
 [BLUE, '271,343 285,341 313,320 335,297 356,275 367,270'], [RED, '367,270 378,270'], [BLUE, '378,270 386,270'], [RED, '386,270 403,269 422,277 439,288 455,297 483,308 499,323 526,360 548,393 565,417 581,430 595,437'],
 [BLUE, '595,437 614,432 636,420 658,413 677,404'], [RED, '677,404 691,410 707,440 721,473 735,507 749,515'],
 [BLUE, '749,515 768,497 795,468 823,430 843,405 860,390 882,370'], [RED, '882,370 891,370 907,390 920,415 930,432 940,442 955,442'],
 [BLUE, '955,442 970,436'], [RED, '970,436 983,440 1003,460 1022,473'], [BLUE, '1022,473 1032,474 1047,463 1065,447'],
 [RED, '1065,447 1073,448 1082,463 1090,503 1103,573 1113,627 1127,693 1140,763 1150,813 1158,843 1177,887 1187,917 1197,950 1210,975 1220,984 1227,984'],
 [BLUE, '1227,984 1235,984 1243,968 1257,945 1270,932 1280,930 1293,918 1307,903'], [RED, '1307,903 1330,905 1343,913 1357,920 1373,935 1383,940 1397,940'],
 [BLUE, '1397,940 1403,936 1417,935 1425,929'], [RED, '1425,929 1433,932 1447,943 1460,957 1468,961'],
 [BLUE, '1468,961 1480,957 1497,945 1513,942 1527,928 1537,923'], [RED, '1537,923 1557,928 1580,953 1603,977'],
 [BLUE, '1603,977 1627,968 1633,964'], [RED, '1633,964 1652,967'], [BLUE, '1652,967 1667,968 1680,962 1697,937 1717,917 1730,902 1745,895'], [RED, '1745,895 1764,898']
];
const entries = [[1133, 810], [1141, 820], [1180, 835], [1252, 890], [1263, 901], [1438, 929], [1583, 975]];
const arrow = ([x, y]) => `<path d="M${x - 5} ${y - 2}h4v-5l7 7-7 7v-5h-4z" fill="#108010" stroke="#fff" stroke-width="2" paint-order="stroke"/>`;
const trades = entries.map(([x, y]) => line(`${x + 6},${y} 1693,887`, BLUE, 2, 'stroke-dasharray="6 6"')).join('');

price.innerHTML = `<g transform="translate(-10 -102)">
 <rect x="8" y="534" width="186" height="640"/>
 <text x="211" y="446" font-family="Liberation Sans" font-size="69" fill="#a9a9a9">Text</text>
 <path d="M8 915H2462" stroke="${RED}" stroke-width="2"/>
 <path d="M8 1044H2462" stroke="#ff28ff" stroke-width="4"/>
 <path d="M8 755H467V100" fill="none" stroke="${BLUE}" stroke-width="2"/>
 <text x="957" y="408" font-family="Liberation Sans" font-weight="bold" font-size="24" fill="#daa539">London 31</text>
 ${line(slowBlue, BLUE)}${line(slowRed, RED)}${line(slowMaroon, MAROON)}${line(purple, PURPLE, 2)}
 <rect x="955" y="385" width="808" height="644" fill="none" stroke="#108010" stroke-width="2"/>
 ${hull.map(([c, p]) => line(p, c)).join('')}${line(fastMaroon, MAROON)}${line(black, '#000')}
 ${entries.map(arrow).join('')}<path d="M1691 887l9-10v14l-6 4z" fill="#98fb98" stroke="#fff" stroke-width="1"/>
 ${trades}${candles}
 <path d="M1760 914H1860" stroke="${BLUE}" stroke-width="4"/><path d="M1764 940H1860" stroke="#000" stroke-width="4"/>
 <text x="1773" y="882" font-family="Liberation Sans" font-size="41">-0:22 {1.3}</text>
 <path d="M1764 102h18l-9 10z" fill="#778899"/><path d="M15 114h15l-7 8z"/>
 <text x="39" y="124" font-size="21">AUDCAD,M1</text></g>`;

oscillator.innerHTML = `<g transform="translate(-10 -1190)">
 <text x="17" y="1214" font-size="18">qqe div1: qqe of RSX (55,2) 47.7684 47.1499 48.7708 48.7708</text>
 ${line('10,1299 29,1304 96,1304 116,1297 138,1288 161,1278 192,1264 219,1254 268,1242 304,1235 330,1225 371,1211 397,1204 420,1200 455,1198 487,1200 513,1206 536,1216 567,1236 607,1257 638,1265 700,1276 726,1283 748,1293 766,1296 794,1293 828,1283 863,1272 909,1259 945,1255 981,1250 1032,1250 1042,1251 1083,1250 1108,1257 1134,1277 1169,1307 1200,1325 1241,1343 1277,1353 1322,1358 1363,1355 1404,1351 1440,1342 1500,1327 1512,1322 1543,1310 1579,1296 1594,1295 1630,1285 1681,1274 1716,1259 1764,1244', BLUE)}
 ${line('10,1258 45,1264 80,1270 125,1276 214,1276 259,1271 321,1264 393,1251 446,1242 491,1235 540,1228 580,1228 625,1233 700,1242 756,1252 817,1261 879,1265 924,1266 1006,1263 1067,1260 1134,1260 1169,1265 1231,1277 1292,1295 1363,1310 1424,1321 1481,1325 1538,1326 1594,1322 1650,1315 1706,1306 1764,1294', MAROON)}
 <path d="M12 1353H2466" stroke="#ba55d3" stroke-width="2" stroke-dasharray="6 6"/></g>`;

zigzag.innerHTML = `<g transform="translate(-10 -1372)">
 <text x="17" y="1396" font-size="18">ZigZagCallRepaintLegs(own version) 0.000000</text>
 ${line('10,1421 291,1421 299,1389 307,1421 315,1389 323,1421 347,1421 355,1389 363,1421 531,1421 539,1453 547,1453 555,1421 683,1421 691,1453 707,1453 715,1421 723,1453 731,1453 739,1421 1075,1421 1083,1453 1099,1453 1107,1421 1115,1421 1123,1453 1131,1453 1139,1421 1147,1453 1155,1453 1163,1421 1187,1421 1195,1453 1203,1421 1211,1453 1219,1421 1363,1421 1371,1453 1379,1421 1427,1421 1435,1453 1443,1453 1451,1421 1563,1421 1571,1453 1579,1421 1587,1453 1595,1453 1603,1421 1762,1421', '#000', 2)}</g>`;

times.innerHTML = ['2023', '08:18', '08:34', '08:50', '09:06', '09:22', '09:38', '09:54', '10:10', '10:26', '10:42', '10:58', '11:14', '11:30']
  .map(t => `<div class="w-32 shrink-0 whitespace-nowrap"><i class="ml-[2px] block h-[6px] w-[2px] bg-black"></i>31 Mar ${t}</div>`).join('');
</script>
</body>
</html>
